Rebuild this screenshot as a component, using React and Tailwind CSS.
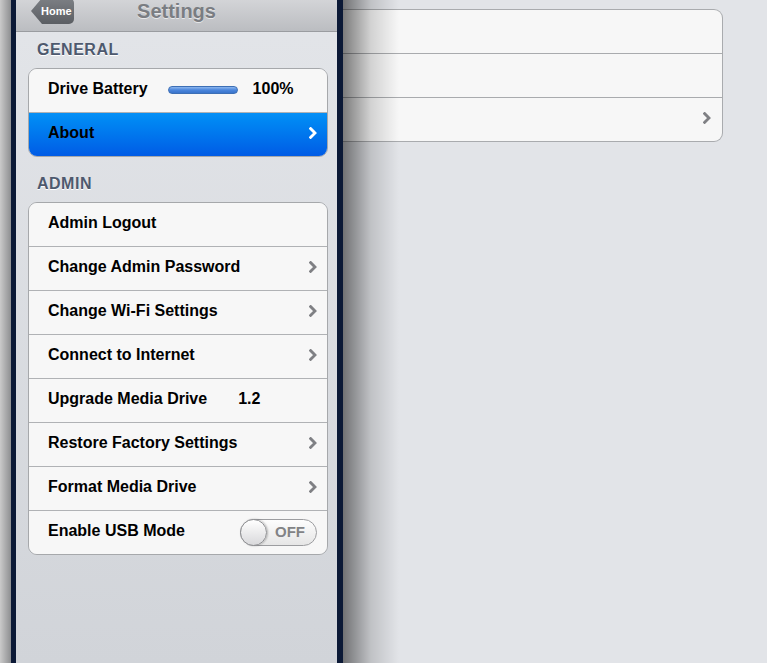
/**
 * App — iPad-style settings split view with a popover panel on the left.
 */

const font = { fontFamily: '"Liberation Sans", Arial, sans-serif' };

function Chevron({ white }) {
  return (
    <svg width="8" height="12" viewBox="0 0 8 12" className="shrink-0">
      <path
        d="M1.6 1.6 L6 6 L1.6 10.4"
        fill="none"
        stroke={white ? '#ffffff' : '#7f8084'}
        strokeWidth="2.8"
        strokeLinecap="square"
      />
    </svg>
  );
}

function Row({ children, last, selected, first }) {
  return (
    <div
      className={
        'flex items-center pl-[19px] pr-[10px] pb-[3px] text-[16px] font-bold ' +
        (last ? 'h-[43px] ' : 'h-[44px] border-b border-[#b0b2b5] ') +
        (selected ? 'bg-gradient-to-b from-[#0590f6] to-[#015be5] ' : 'bg-[#f7f7f7] ') +
        (first ? 'rounded-t-[8px] ' : '') +
        (last ? 'rounded-b-[8px]' : '')
      }
    >
      {children}
    </div>
  );
}

function Toggle() {
  return (
    <div className="relative mt-[3px] w-[77px] h-[27px] rounded-full border border-[#9c9da0] bg-gradient-to-b from-[#fdfdfd] to-[#e6e6e6] flex items-center">
      <div className="absolute left-[-1px] top-[-1px] w-[27px] h-[27px] rounded-full border border-[#8e8f92] bg-gradient-to-b from-[#ffffff] to-[#d9d9db] shadow-[1px_0_2px_rgba(0,0,0,0.25)]" />
      <span className="ml-[34px] text-[15px] font-bold text-[#828386]">OFF</span>
    </div>
  );
}

export default function App() {
  const admin = [
    { label: 'Admin Logout' },
    { label: 'Change Admin Password', chevron: true },
    { label: 'Change Wi-Fi Settings', chevron: true },
    { label: 'Connect to Internet', chevron: true },
    { label: 'Upgrade Media Drive', value: '1.2' },
    { label: 'Restore Factory Settings', chevron: true },
    { label: 'Format Media Drive', chevron: true },
    { label: 'Enable USB Mode', toggle: true },
  ];

  return (
    <div className="w-full h-screen overflow-hidden flex bg-[#e2e4e8] text-black" style={font}>
      {/* Left shadow strip */}
      <div className="w-[11px] shrink-0 bg-gradient-to-r from-[#cacaca] to-[#8e8f91]" />

      {/* Popover panel */}
      <div className="w-[332px] shrink-0 border-l-[5px] border-r-[6px] border-[#0b1936] flex flex-col bg-gradient-to-b from-[#e3e5e9] to-[#d1d4d9]">
        {/* Header */}
        <div className="relative h-[32px] shrink-0 border-b border-[#9a9ca0] bg-gradient-to-b from-[#d3d4d7] to-[#bbbdc1] flex justify-center">
          <div className="absolute left-[15px] top-[-2px] h-[26px] w-[43px] rounded-r-[5px] bg-gradient-to-b from-[#7d8085] to-[#5b5e63] [clip-path:polygon(11px_0,100%_0,100%_100%,11px_100%,0_50%)] flex items-center pl-[10px]">
            <span className="text-[11px] font-bold text-white">Home</span>
          </div>
          <div className="mt-[-1px] leading-[24px] text-[20px] font-bold text-[#7a7d82] [text-shadow:0_1px_0_rgba(255,255,255,0.6)]">
            Settings
          </div>
        </div>

        {/* General */}
        <div className="pt-[8px] h-[36px] pl-[21px] text-[16px] leading-[20px] font-bold text-[#4e596e] tracking-[0.5px] [text-shadow:0_1px_0_#ffffff]">
          GENERAL
        </div>
        <div className="ml-[12px] mr-[9px] border border-[#a6a8ab] rounded-[9px]">
          <Row first>
            <span>Drive Battery</span>
            <div className="ml-[20px] mt-[2px] w-[70px] h-[8px] rounded-full border border-[#3d6fb5] bg-gradient-to-b from-[#8cb6ee] via-[#4b86dc] to-[#3a74cc]" />
            <span className="ml-[15px]">100%</span>
          </Row>
          <Row last selected>
            <span className="flex-1">About</span>
            <Chevron white />
          </Row>
        </div>

        {/* Admin */}
        <div className="pt-[17px] h-[45px] pl-[21px] text-[16px] leading-[20px] font-bold text-[#4e596e] tracking-[0.5px] [text-shadow:0_1px_0_#ffffff]">
          ADMIN
        </div>
        <div className="ml-[12px] mr-[9px] border border-[#a6a8ab] rounded-[9px]">
          {admin.map((item, i) => (
            <Row key={item.label} first={i === 0} last={i === admin.length - 1}>
              <span className={item.value ? '' : 'flex-1'}>{item.label}</span>
              {item.value && <span className="ml-[31px]">{item.value}</span>}
              {item.chevron && <Chevron />}
              {item.toggle && <Toggle />}
            </Row>
          ))}
        </div>
      </div>

      {/* Detail area */}
      <div className="relative flex-1 pt-[9px] pr-[44px]">
        <div className="border border-l-0 border-[#a9abae] rounded-r-[9px] bg-[#f7f7f7]">
          <div className="h-[44px] border-b border-[#a9abae]" />
          <div className="h-[44px] border-b border-[#a9abae]" />
          <div className="h-[43px] flex items-center justify-end pr-[11px] pb-[3px]">
            <Chevron />
          </div>
        </div>

        {/* Panel shadow over detail */}
        <div className="absolute left-0 top-0 bottom-0 w-[56px] bg-gradient-to-r from-[rgba(0,0,0,0.5)] via-[rgba(0,0,0,0.15)] to-transparent" />
      </div>
    </div>
  );
}
